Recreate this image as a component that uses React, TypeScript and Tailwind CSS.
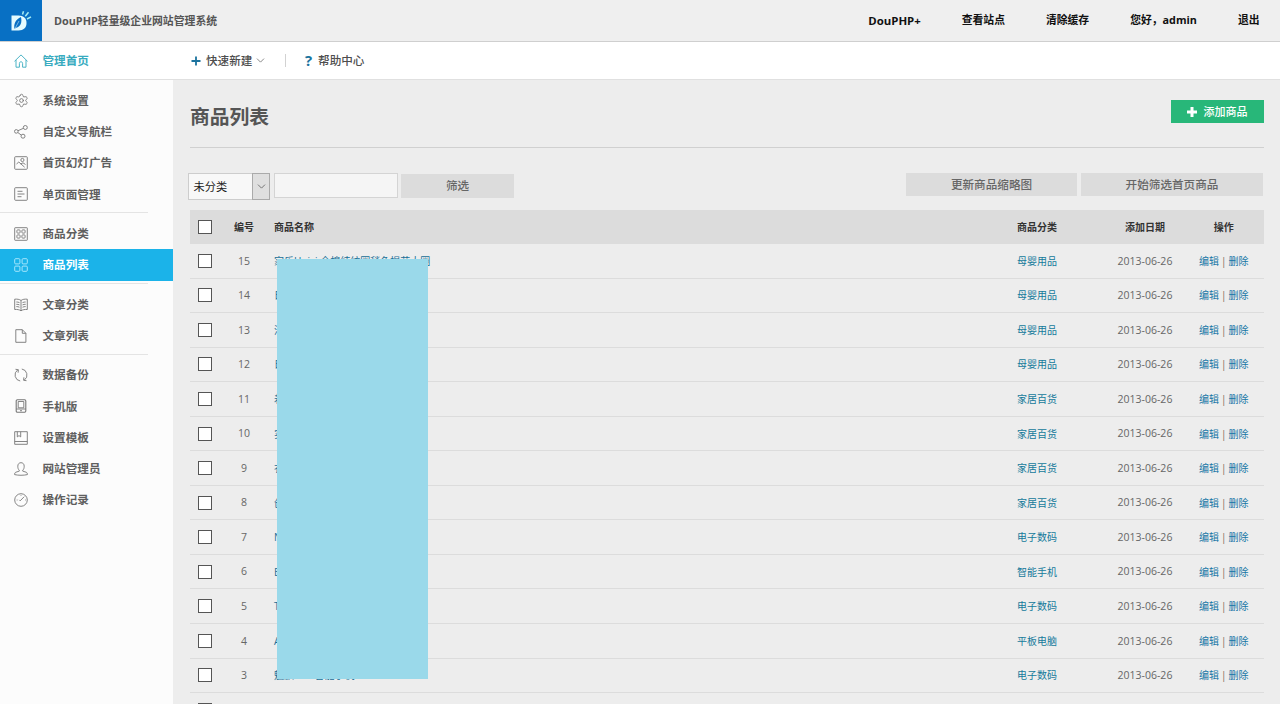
import type { ReactNode } from 'react'
import { ChevronDown, Settings } from 'lucide-react'

interface MenuItem {
  label: string
  icon: ReactNode
  active?: boolean
}

interface Product {
  id: number
  name: string
  category: string
}

function Icon({ children }: { children: ReactNode }) {
  return (
    <svg width="14" height="14" viewBox="0 0 14 14" fill="none" stroke="currentColor" strokeWidth="0.9" className="shrink-0">
      {children}
    </svg>
  )
}

const groups: MenuItem[][] = [
  [
    { label: '系统设置', icon: <Settings size={15} strokeWidth={1.4} className="-mr-px shrink-0" /> },
    {
      label: '自定义导航栏',
      icon: (
        <Icon>
          <circle cx="2.3" cy="6.4" r="1.8" />
          <circle cx="11.3" cy="2.5" r="2" />
          <circle cx="9" cy="11.2" r="2" />
          <path d="M4 5.7 9.4 3.3M3.8 7.5 7.3 10.1" />
        </Icon>
      ),
    },
    {
      label: '首页幻灯广告',
      icon: (
        <Icon>
          <rect x=".7" y=".7" width="12.6" height="12.6" rx=".8" />
          <circle cx="8.4" cy="4" r="1.6" />
          <path d="m2.5 8 2.3-2 5.8 5.2M6.7 8 9 6.8 11.5 8.5" />
        </Icon>
      ),
    },
    {
      label: '单页面管理',
      icon: (
        <Icon>
          <rect x=".7" y=".7" width="12.6" height="12.6" rx=".8" />
          <path d="M3.5 4.3h5M3.5 7h7M3.5 9.7h4" />
        </Icon>
      ),
    },
  ],
  [
    {
      label: '商品分类',
      icon: (
        <Icon>
          <rect x=".7" y=".7" width="12.6" height="12.6" rx=".5" />
          <rect x="2.9" y="2.9" width="3.2" height="3.2" rx=".8" />
          <rect x="7.9" y="2.9" width="3.2" height="3.2" rx=".8" />
          <rect x="2.9" y="7.9" width="3.2" height="3.2" rx=".8" />
          <rect x="7.9" y="7.9" width="3.2" height="3.2" rx=".8" />
        </Icon>
      ),
    },
    {
      label: '商品列表',
      active: true,
      icon: (
        <Icon>
          <rect x=".7" y=".7" width="5.2" height="5.2" rx="1" />
          <rect x="8.1" y=".7" width="5.2" height="5.2" rx="1" />
          <rect x=".7" y="8.1" width="5.2" height="5.2" rx="1" />
          <rect x="8.1" y="8.1" width="5.2" height="5.2" rx="1" />
        </Icon>
      ),
    },
  ],
  [
    {
      label: '文章分类',
      icon: (
        <Icon>
          <path d="M7 2.5C5.5 1.2 3 1 .7 1.2v10.3c2.3-.2 4.8.1 6.3 1.3 1.5-1.2 4-1.5 6.3-1.3V1.2C11 1 8.5 1.2 7 2.5zM7 2.5v10.3" />
          <path d="M2.3 4c1.1 0 2.2.1 3.2.6M2.3 6.3c1.1 0 2.2.1 3.2.6M2.3 8.6c1.1 0 2.2.1 3.2.6M11.7 4c-1.1 0-2.2.1-3.2.6M11.7 6.3c-1.1 0-2.2.1-3.2.6M11.7 8.6c-1.1 0-2.2.1-3.2.6" />
        </Icon>
      ),
    },
    {
      label: '文章列表',
      icon: (
        <Icon>
          <path d="M1.8.7h6.5l3.6 3.6v9H1.8zM8.3.7v3.6h3.6" />
        </Icon>
      ),
    },
  ],
  [
    {
      label: '数据备份',
      icon: (
        <Icon>
          <path d="M6.2 13A6.1 6.1 0 0 1 3.6 2M1.5 1.3l2.9.4-.3 3M7.8 1a6.1 6.1 0 0 1 2.6 11M12.5 12.7l-2.900-.4.300-3" />
        </Icon>
      ),
    },
    {
      label: '手机版',
      icon: (
        <Icon>
          <rect x="2.2" y=".7" width="9.6" height="12.6" rx="1.2" strokeWidth="1.1" />
          <path d="M4.2 2.5h5.6v6.3H4.2zM2.2 10h9.6M6 11.7h2" />
        </Icon>
      ),
    },
    {
      label: '设置模板',
      icon: (
        <Icon>
          <path d="M.7.7h12.6v12.6H.7zM.7 10.5h12.6M3.3.7v5.2L5 4.600l1.700 1.300V.7" />
        </Icon>
      ),
    },
    {
      label: '网站管理员',
      icon: (
        <Icon>
          <path d="M5.3 8.2C4.2 7.4 3.8 5.9 3.8 4.2 3.8 2 5.1.7 7 .7s3.200 1.300 3.200 3.500c0 1.700-.4 3.200-1.500 4v.9l3.700 1.200c.8.3 1 1.100 1 2.300-4 .9-8.800.9-12.800 0 0-1.200.2-2 1-2.300l3.700-1.200z" />
        </Icon>
      ),
    },
    {
      label: '操作记录',
      icon: (
        <Icon>
          <circle cx="7" cy="7" r="6.3" />
          <path d="m6.2 7.8 4-4.100M6.200 7.800l-.9-.9M2.700 7h.8M7 2v.7M11.200 7h.7" />
        </Icon>
      ),
    },
  ],
]

const products: Product[] = [
  { id: 15, name: '家乐Huiyi 全棉纯纺圈毯色提花大圈', category: '母婴用品' },
  { id: 14, name: '日用奶瓶', category: '母婴用品' },
  { id: 13, name: '洁柔湿巾', category: '母婴用品' },
  { id: 12, name: '日式童装', category: '母婴用品' },
  { id: 11, name: '着色台灯', category: '家居百货' },
  { id: 10, name: '实木衣架', category: '家居百货' },
  { id: 9, name: '衣物收纳', category: '家居百货' },
  { id: 8, name: '创意水杯', category: '家居百货' },
  { id: 7, name: 'Nikon 相机', category: '电子数码' },
  { id: 6, name: 'BlackBerry', category: '智能手机' },
  { id: 5, name: 'ThinkPad', category: '电子数码' },
  { id: 4, name: 'Apple iPad', category: '平板电脑' },
  { id: 3, name: '魅族MX2智能手机', category: '电子数码' },
]

const topLinks = ['查看站点', '清除缓存', '您好，admin', '退出']

const rowGrid = 'grid grid-cols-[31px_46px_1fr_138px_78px_79.5px] items-center'

function Logo() {
  return (
    <div className="flex h-[41px] w-[42px] shrink-0 items-center justify-center bg-[#0870c4]">
      <svg width="22" height="22" viewBox="0 0 22 22">
        <path d="M1.5 5.500h7c5 0 8 2.800 8 7.500s-3 7.500-8 7.500h-7z" fill="#e4fbff" />
        <path d="M4.500 19c-1-5 1-9.500 6.500-12 1.200 5.500-.2 9.500-4.800 10.800z" fill="#0870c4" />
        <path d="M4.500 19.500 9 11" stroke="#e4fbff" strokeWidth=".5" />
        <path d="m12.500 4.500 1-3.300M15.300 6.300l3.200-4M17 9l4-2.200" stroke="#a5edf4" strokeWidth="1.500" />
      </svg>
    </div>
  )
}

function Checkbox() {
  return <span className="mr-px block size-[14px] justify-self-center border border-[#555] bg-white" />
}

function Sidebar() {
  return (
    <aside className="w-[173px] shrink-0 bg-[#fcfcfc] text-[11.6px] font-bold text-[#5f5f5f]">
      {groups.map((items, i) => (
        <div key={i}>
          <div className="pt-[5px] pb-[2.2px]">
            {items.map(item => (
              <div
                key={item.label}
                className={`flex h-[31.25px] items-center gap-[14.5px] pl-[14px] ${item.active ? 'bg-[#1bb3e9] text-white' : ''}`}
              >
                <span className={item.active ? 'text-[#b5ecff]' : 'text-[#777]'}>{item.icon}</span>
                <span>{item.label}</span>
              </div>
            ))}
          </div>
          {i < groups.length - 1 && <div className="h-px w-[148px] bg-[#e4e4e4]" />}
        </div>
      ))}
    </aside>
  )
}

export default function App() {
  return (
    <div className="flex h-[704px] w-[1280px] flex-col overflow-hidden bg-[#ededed] font-['Open_Sans','Noto_Sans_CJK_SC',sans-serif] leading-none">
      <header className="flex h-[42px] shrink-0 items-start border-b border-[#cfcfcf] bg-[#efefef]">
        <Logo />
        <div className="flex h-[42px] flex-1 items-center justify-between pr-[20.5px] pl-3 font-bold">
          <span className="text-[10.85px] text-[#555]">DouPHP轻量级企业网站管理系统</span>
          <nav className="flex gap-[41px] text-[10.8px] text-[#111]">
            <a className="text-[11.4px]">DouPHP+</a>
            {topLinks.map(t => <a key={t}>{t}</a>)}
          </nav>
        </div>
      </header>

      <div className="flex h-[38px] shrink-0 items-center border-b border-[#e0e0e0] bg-white text-[11.6px]">
        <div className="flex w-[173px] items-center gap-[14.5px] pl-[14px] font-bold text-[#38abc0]">
          <Icon>
            <path d="M.5 7.300 7 .9l6.500 6.400M2 6v7.200h3.400V9.500c0-1 .6-1.700 1.600-1.700s1.600.7 1.600 1.700v3.700H12V6" />
          </Icon>
          <span>管理首页</span>
        </div>
        <div className="flex items-center pl-[18px] font-medium text-[#4d4d4d]">
          <svg width="10" height="10" viewBox="0 0 10 10" stroke="#1b739e" strokeWidth="1.8"><path d="M5 .5v9M.5 5h9" /></svg>
          <span className="ml-[5px]">快速新建</span>
          <ChevronDown size={13} strokeWidth={1.600} className="ml-[2px] text-[#777]" />
          <span className="ml-[18px] h-[13px] w-px bg-[#d2d2d2]" />
          <span className="ml-[18.5px] text-[15px] font-bold text-[#1b739e]">?</span>
          <span className="ml-[6px]">帮助中心</span>
        </div>
      </div>

      <div className="flex min-h-0 flex-1">
        <Sidebar />
        <main className="min-w-0 flex-1 pr-[16.5px] pl-[17px]">
          {/* Page heading */}
          <div className="flex h-[68px] items-start justify-between border-b border-[#d0d0d0] pt-5">
            <h1 className="pt-[7px] text-[19.8px] leading-[20px] font-bold text-[#555]">商品列表</h1>
            <button className="flex h-[23px] w-[93px] items-center justify-center gap-[7px] bg-[#28b779] text-[11px] font-medium text-white">
              <svg width="10" height="10" viewBox="0 0 10 10" stroke="currentColor" strokeWidth="3"><path d="M5 0v10M0 5h10" /></svg>
              添加商品
            </button>
          </div>

          {/* Filter bar */}
          <div className="-ml-[2px] flex h-[62px] items-start pt-[25px] text-[11.6px] font-medium text-[#666]">
            <div className="flex h-[27px] w-[82px] border border-[#cdcdcd] bg-[#f8f8f8]">
              <span className="flex flex-1 items-center pl-[4.5px] text-[11.2px] font-normal text-[#222]">未分类</span>
              <span className="-my-px -mr-px flex w-[18px] items-center justify-center border border-[#aaa] bg-[#dfdfdf]">
                <ChevronDown size={13} strokeWidth={1.600} />
              </span>
            </div>
            <div className="ml-[4px] h-[25px] w-[124px] border border-[#d4d4d4] bg-[#f5f5f5]" />
            <button className="mt-px ml-[3px] h-[24px] w-[113px] bg-[#dcdcdc]">筛选</button>
            <div className="mr-[.5px] ml-auto flex gap-1">
              <button className="h-[23px] w-[171px] bg-[#dcdcdc]">更新商品缩略图</button>
              <button className="h-[23px] w-[182px] bg-[#dcdcdc]">开始筛选首页商品</button>
            </div>
          </div>

          {/* Product table */}
          <div className="relative text-[10px]">
            <div className={`${rowGrid} h-[34px] bg-[#dcdcdc] text-center font-bold text-[#333]`}>
              <Checkbox />
              <span>编号</span>
              <span className="pl-[7px] text-left">商品名称</span>
              <span>商品分类</span>
              <span>添加日期</span>
              <span>操作</span>
            </div>
            {products.map(p => (
              <div key={p.id} className={`${rowGrid} h-[34.55px] border-b border-[#dcdcdc] text-center text-[#666]`}>
                <Checkbox />
                <span className="text-[10.5px]">{p.id}</span>
                <span className="pl-[7px] text-left text-[#176e96]">{p.name}</span>
                <span className="text-[#147a9b]">{p.category}</span>
                <span className="text-[10.5px]">2013-06-26</span>
                <span className="whitespace-nowrap text-[#1676a6]">
                  编辑<span className="px-[2px] text-[#7c6a5c]">|</span>删除
                </span>
              </div>
            ))}
            <div className={`${rowGrid} h-[34.55px]`}>
              <Checkbox />
            </div>
            <div className="absolute top-[49px] left-[87px] h-[420px] w-[151px] bg-[#9ad9ea]" />
          </div>
        </main>
      </div>
    </div>
  )
}
